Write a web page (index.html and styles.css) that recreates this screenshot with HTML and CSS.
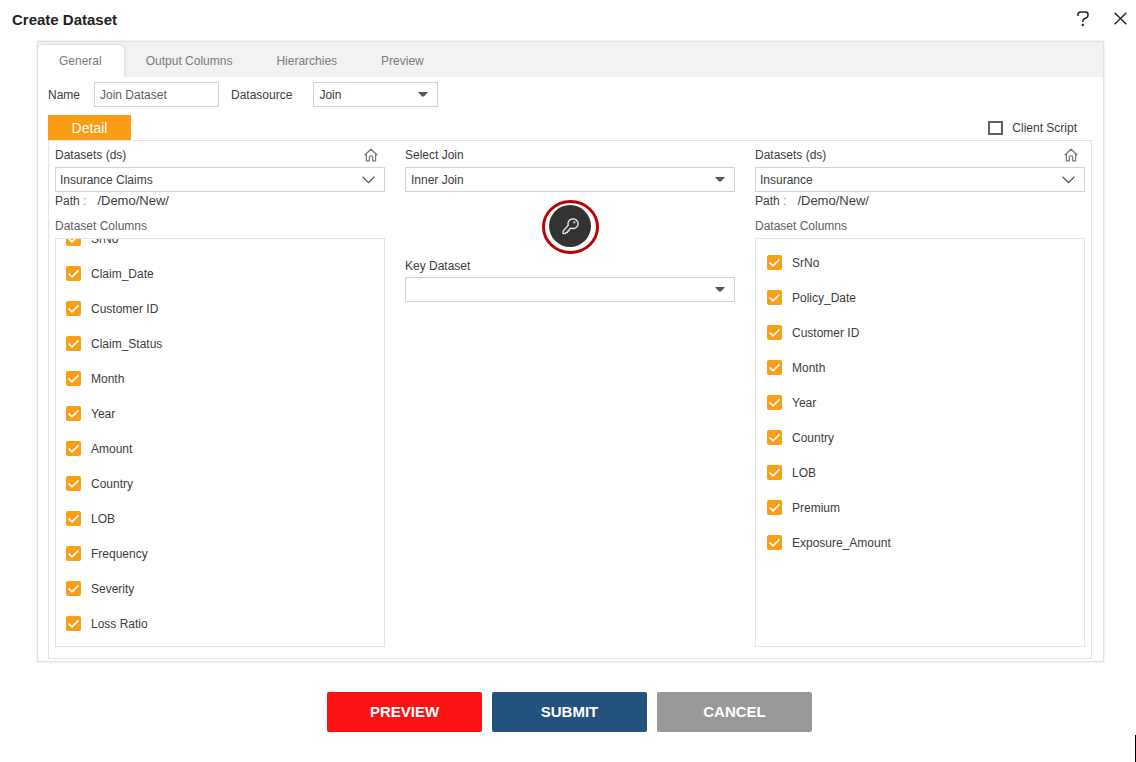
FILE: index.html
```
<!DOCTYPE html>
<html lang="en">
<head>
<meta charset="utf-8">
<title>Create Dataset</title>
<link rel="stylesheet" href="styles.css">
</head>
<body>
<svg class="sprites" aria-hidden="true">
  <symbol id="home" viewBox="0 0 14 14"><path d="M.6 7.3 7 1.2l6.400 6.100M2.400 6v6.800h2.900V9.600c0-2.200 3.400-2.200 3.400 0v3.200h2.900V6" fill="none" stroke="currentColor" stroke-width="1.200"/></symbol>
  <symbol id="chevron" viewBox="0 0 13 8"><path d="M.6.800 6.500 6.600 12.400.800" fill="none" stroke="currentColor" stroke-width="1.200"/></symbol>
  <symbol id="caret" viewBox="0 0 10 5"><path d="M0 0h10L6 4.600H4z" fill="currentColor"/></symbol>
</svg>
<header class="titlebar">
  <h1 class="title">Create Dataset</h1>
  <button class="icon-button" aria-label="Help"><svg width="12" height="16" viewBox="0 0 12 16"><path d="M1 5V3.500Q1 1 3.500 1h5Q11 1 11 3.500v1Q11 6 9 7L7 8Q5.800 8.600 5.800 11" fill="none" stroke="#222" stroke-width="1.500"/><circle cx="5.800" cy="14" r="1.200" fill="#222"/></svg></button>
  <button class="icon-button" aria-label="Close"><svg width="13" height="13" viewBox="0 0 13 13"><path d="M.7.700 12.300 12.300M12.300.700.700 12.300" stroke="#222" stroke-width="1.400"/></svg></button>
</header>
<main class="panel">
  <nav class="tabs">
    <a class="tab tab-active" href="#general">General</a>
    <a class="tab" href="#output">Output Columns</a>
    <a class="tab" href="#hierarchies">Hierarchies</a>
    <a class="tab" href="#preview">Preview</a>
  </nav>
  <div class="fields">
    <label for="name">Name</label>
    <input class="box name-input" id="name" type="text" value="Join Dataset">
    <label for="source">Datasource</label>
    <div class="picker source-picker">
      <select class="box" id="source"><option>Join</option></select>
      <svg class="caret"><use href="#caret"/></svg>
    </div>
  </div>
  <div class="detail-bar">
    <button class="detail-tab">Detail</button>
    <label class="script-option"><input class="script-check" type="checkbox">Client Script</label>
  </div>
  <div class="detail">
    <section class="column">
      <div class="label-row"><label for="left">Datasets (ds)</label><button class="icon-button" aria-label="Home"><svg class="home"><use href="#home"/></svg></button></div>
      <div class="picker">
        <select class="box dataset-select" id="left"><option>Insurance Claims</option></select>
        <svg class="chevron"><use href="#chevron"/></svg>
      </div>
      <div class="path"><span>Path <span class="colon">:</span></span><span class="path-value">/Demo/New/</span></div>
      <div class="list-title">Dataset Columns</div>
      <div class="list list-scrolled">
        <label class="item"><input class="check" type="checkbox" checked>SrNo</label>
        <label class="item"><input class="check" type="checkbox" checked>Claim_Date</label>
        <label class="item"><input class="check" type="checkbox" checked>Customer ID</label>
        <label class="item"><input class="check" type="checkbox" checked>Claim_Status</label>
        <label class="item"><input class="check" type="checkbox" checked>Month</label>
        <label class="item"><input class="check" type="checkbox" checked>Year</label>
        <label class="item"><input class="check" type="checkbox" checked>Amount</label>
        <label class="item"><input class="check" type="checkbox" checked>Country</label>
        <label class="item"><input class="check" type="checkbox" checked>LOB</label>
        <label class="item"><input class="check" type="checkbox" checked>Frequency</label>
        <label class="item"><input class="check" type="checkbox" checked>Severity</label>
        <label class="item"><input class="check" type="checkbox" checked>Loss Ratio</label>
      </div>
    </section>
    <section class="column">
      <div class="label-row"><label for="join">Select Join</label></div>
      <div class="picker">
        <select class="box" id="join"><option>Inner Join</option></select>
        <svg class="caret"><use href="#caret"/></svg>
      </div>
      <button class="key-button" aria-label="Join key">
        <svg width="57" height="54" viewBox="0 0 57 54">
          <ellipse cx="28.500" cy="27" rx="27" ry="25.500" fill="#fff" stroke="#c00000" stroke-width="3"/>
          <circle cx="28" cy="26" r="21" fill="#333"/>
          <path d="M26.200 25.200A5.100 4.800 0 1 1 30 28.400l-1.500-.2-1.500 1.500v1.400h-1.600v1.500h-1.600l-.7 1h-2v-2.500z" fill="none" stroke="#e6e6e6" stroke-width="1.400" stroke-linejoin="round"/>
          <circle cx="32.300" cy="22.300" r="1.100" fill="#e6e6e6"/>
        </svg>
      </button>
      <div class="label-row key-label"><label for="key">Key Dataset</label></div>
      <div class="picker">
        <select class="box" id="key"><option></option></select>
        <svg class="caret"><use href="#caret"/></svg>
      </div>
    </section>
    <section class="column">
      <div class="label-row"><label for="right">Datasets (ds)</label><button class="icon-button" aria-label="Home"><svg class="home"><use href="#home"/></svg></button></div>
      <div class="picker">
        <select class="box dataset-select" id="right"><option>Insurance</option></select>
        <svg class="chevron"><use href="#chevron"/></svg>
      </div>
      <div class="path"><span>Path <span class="colon">:</span></span><span class="path-value">/Demo/New/</span></div>
      <div class="list-title">Dataset Columns</div>
      <div class="list">
        <label class="item"><input class="check" type="checkbox" checked>SrNo</label>
        <label class="item"><input class="check" type="checkbox" checked>Policy_Date</label>
        <label class="item"><input class="check" type="checkbox" checked>Customer ID</label>
        <label class="item"><input class="check" type="checkbox" checked>Month</label>
        <label class="item"><input class="check" type="checkbox" checked>Year</label>
        <label class="item"><input class="check" type="checkbox" checked>Country</label>
        <label class="item"><input class="check" type="checkbox" checked>LOB</label>
        <label class="item"><input class="check" type="checkbox" checked>Premium</label>
        <label class="item"><input class="check" type="checkbox" checked>Exposure_Amount</label>
      </div>
    </section>
  </div>
</main>
<footer class="actions">
  <button class="action preview">PREVIEW</button>
  <button class="action submit">SUBMIT</button>
  <button class="action cancel">CANCEL</button>
</footer>
<div class="edge-mark"></div>
</body>
</html>
```

FILE: styles.css
```
* { box-sizing: border-box; }

body {
  margin: 0;
  height: 100vh;
  min-height: 560px;
  display: flex;
  flex-direction: column;
  position: relative;
  background: #fff;
  color: #3c3c3c;
  font: 12px/16px "Liberation Sans", Arial, sans-serif;
}

button, input, select { font: inherit; color: inherit; }
button { border: 0; padding: 0; background: none; cursor: pointer; }
svg { display: block; }
.sprites { display: none; }

.titlebar {
  height: 41px;
  padding: 0 9px 4px 12px;
  display: flex;
  align-items: center;
  gap: 25px;
}
.title { flex: 1; margin: 3px 0 0; font-size: 15px; font-weight: bold; color: #222; }

.panel {
  flex: 1;
  min-height: 0;
  margin: 0 32px 0 37px;
  display: flex;
  flex-direction: column;
  border: 1px solid #e2e2e2;
  box-shadow: 0 0 2px #ddd;
}

.tabs {
  height: 35px;
  padding-top: 3px;
  display: flex;
  background: #f2f2f2;
}
.tab {
  padding: 8px 22px 0;
  color: #7a7a7a;
  text-decoration: none;
}
.tab-active {
  padding-left: 21px;
  background: #fff;
  border-radius: 5px 5px 0 0;
  box-shadow: 1px -1px 2px #ddd;
  clip-path: inset(-3px -4px 0 -1px);
}

.fields {
  padding: 5px 10px 8px;
  display: flex;
  align-items: center;
  gap: 12px;
}
.box {
  width: 100%;
  height: 25px;
  padding: 0 5px;
  border: 1px solid #cbd2e1;
  border-radius: 0;
  background: #fff;
  appearance: none;
  outline: 0;
}
.name-input { width: 125px; margin-left: 2px; color: #606060; }
.source-picker { width: 125px; margin-left: 9px; }
.picker { position: relative; }
.dataset-select { padding-left: 4px; }
.caret, .chevron { position: absolute; pointer-events: none; color: #555; }
.caret { width: 10px; height: 5px; top: 10px; right: 10px; }
.chevron { width: 13px; height: 8px; top: 9px; right: 10px; }

.detail-bar {
  padding: 0 26px 0 10px;
  display: flex;
  justify-content: space-between;
  align-items: center;
}
.detail-tab {
  width: 83px;
  height: 25px;
  background: #f99d14;
  color: #fff;
  font-size: 14px;
}
.script-option { display: flex; align-items: center; gap: 9px; }
.script-check {
  width: 15px;
  height: 14px;
  margin: 0;
  appearance: none;
  border: 2px solid #606060;
}

.detail {
  flex: 1;
  min-height: 0;
  margin: 0 11px 2px 10px;
  padding: 0 6px 11px;
  border: 1px solid #e4e4e4;
  display: grid;
  grid-template-columns: repeat(3, minmax(0, 1fr));
  grid-template-rows: minmax(0, 1fr);
  gap: 20px;
}
.column { display: flex; flex-direction: column; min-height: 0; }
.label-row {
  height: 26px;
  padding: 2px 7px 0 0;
  display: flex;
  align-items: center;
  justify-content: space-between;
}
.home { width: 14px; height: 14px; color: #777; }
.path { height: 17px; line-height: 18px; display: flex; gap: 11px; }
.path-value { font-size: 13px; }
.colon { color: #888; }
.list-title { padding: 9px 0 4px; color: #606060; }
.list {
  flex: 1;
  min-height: 0;
  padding: 6px 11px 5px;
  border: 1px solid #e4e4e4;
  overflow: hidden;
  display: flex;
  flex-direction: column;
}
.list-scrolled { justify-content: flex-end; padding-left: 10px; }
.item { flex: none; height: 35px; display: flex; align-items: center; gap: 10px; }
.check {
  width: 15px;
  height: 15px;
  margin: 0;
  appearance: none;
  border-radius: 2px;
  background: #fb9e17;
}
.check:checked {
  background-image: url("data:image/svg+xml,%3Csvg xmlns='http://www.w3.org/2000/svg' viewBox='0 0 15 15'%3E%3Cpath d='M2.500 7.500 6 10.800 12.500 4.300' fill='none' stroke='white' stroke-width='1.700'/%3E%3C/svg%3E");
}

.key-button { align-self: center; margin-top: 8px; }
.key-label { height: 23px; padding-top: 0; }

.actions {
  padding: 30px 0;
  display: flex;
  justify-content: center;
  gap: 10px;
  margin-left: 3px;
}
.action {
  width: 155px;
  height: 40px;
  border-radius: 2px;
  color: #fff;
  font-size: 15px;
  font-weight: bold;
}
.preview { background: #fb1313; }
.submit { background: #23527c; }
.cancel { background: #999; }

.edge-mark {
  position: absolute;
  right: 0;
  bottom: 0;
  width: 1px;
  height: 27px;
  background: #000;
}
```
